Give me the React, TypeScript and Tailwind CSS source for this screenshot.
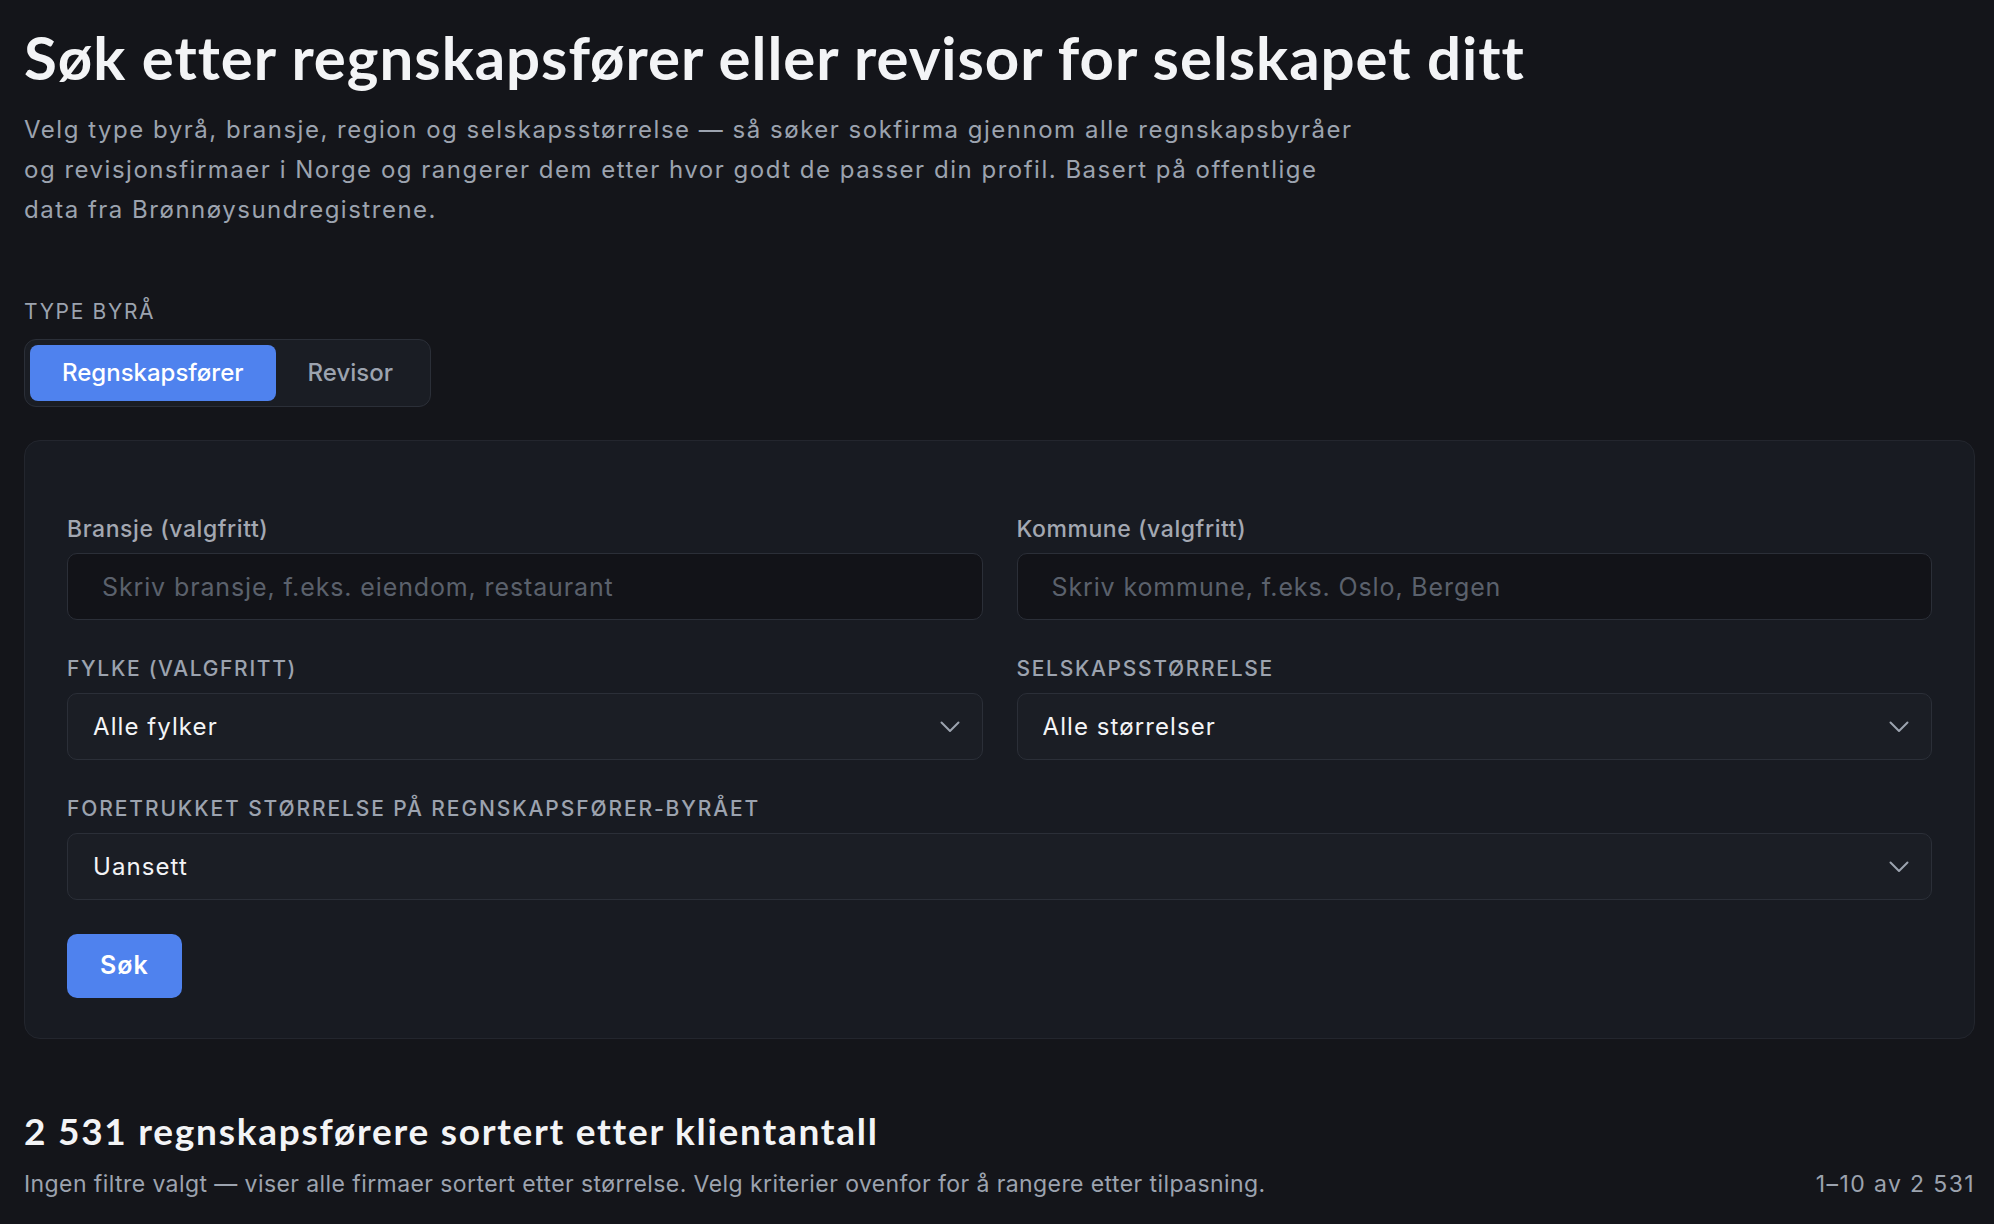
import React from 'react'

function Chevron() {
  return (
    <svg
      className="pointer-events-none absolute right-[23px] top-1/2 -translate-y-1/2"
      width="20"
      height="12"
      viewBox="0 0 20 12"
      fill="none"
    >
      <polyline points="1.5,1.5 10,10 18.5,1.5" stroke="#9ca3af" strokeWidth="2" strokeLinecap="round" strokeLinejoin="round" />
    </svg>
  )
}

function Select({ value, options }: { value: string; options: string[] }) {
  return (
    <div className="relative">
      <select
        defaultValue={value}
        className="h-[67px] w-full appearance-none rounded-[10px] border border-[#2b2f38] bg-[#1b1e25] pl-[25px] pr-12 text-[24px] tracking-[0.045em] text-[#f3f4f6] outline-none"
      >
        {options.map((o) => (
          <option key={o}>{o}</option>
        ))}
      </select>
      <Chevron />
    </div>
  )
}

function TextInput({ placeholder }: { placeholder: string }) {
  return (
    <input
      type="text"
      placeholder={placeholder}
      className="h-[67px] w-full rounded-[10px] border border-[#2b2f38] bg-[#121318] px-[34px] text-[25px] tracking-[0.035em] text-[#f3f4f6] outline-none placeholder:text-[#5b616c]"
    />
  )
}

export default function App() {
  return (
    <div className="min-h-screen bg-[#14151a] pl-6 pr-[19px] pt-6 pb-10 font-['Inter','Noto_Sans',sans-serif] text-[#f3f4f6]">
      {/* Header */}
      <h1 className="font-['Lato',sans-serif] text-[60px] font-bold leading-[66px] tracking-[0.016em] text-[#f3f4f6]">
        Søk etter regnskapsfører eller revisor for selskapet ditt
      </h1>
      <p className="mt-5 max-w-[1345px] text-[24px] leading-[40px] tracking-[0.063em] text-[#9ca3af]">
        Velg type byrå, bransje, region og selskapsstørrelse — så søker sokfirma gjennom alle regnskapsbyråer og
        revisjonsfirmaer i Norge og rangerer dem etter hvor godt de passer din profil. Basert på offentlige data fra
        Brønnøysundregistrene.
      </p>

      {/* Type byrå */}
      <div className="mt-[67px] text-[21px] leading-[30px] tracking-[0.08em] text-[#9ca3af]">TYPE BYRÅ</div>
      <div className="mt-[12px] inline-flex rounded-[12px] border border-[#2b2f38] bg-[#1a1d24] p-[5px]">
        <button className="h-[56px] rounded-[8px] bg-[#4f82ee] px-[32px] text-[24px] font-medium text-white">
          Regnskapsfører
        </button>
        <button className="h-[56px] rounded-[8px] px-[32px] text-[24px] font-medium text-[#9ca3af]">Revisor</button>
      </div>

      {/* Filter card */}
      <div className="mt-[33px] rounded-[16px] border border-[#23262e] bg-[#181b22] px-[42px] pb-[40px] pt-[73px]">
        <div className="grid grid-cols-2 gap-x-[34px] gap-y-[34px]">
          <div>
            <label className="mb-[9px] block text-[23px] font-medium leading-[30px] tracking-[0.025em] text-[#a3a8b2]">
              Bransje (valgfritt)
            </label>
            <TextInput placeholder="Skriv bransje, f.eks. eiendom, restaurant" />
          </div>
          <div>
            <label className="mb-[9px] block text-[23px] font-medium leading-[30px] tracking-[0.025em] text-[#a3a8b2]">
              Kommune (valgfritt)
            </label>
            <TextInput placeholder="Skriv kommune, f.eks. Oslo, Bergen" />
          </div>
          <div>
            <label className="mb-[9px] block text-[21px] font-medium leading-[30px] tracking-[0.08em] text-[#9ca3af]">
              FYLKE (VALGFRITT)
            </label>
            <Select value="Alle fylker" options={['Alle fylker', 'Oslo', 'Vestland', 'Rogaland', 'Trøndelag']} />
          </div>
          <div>
            <label className="mb-[9px] block text-[21px] font-medium leading-[30px] tracking-[0.08em] text-[#9ca3af]">
              SELSKAPSSTØRRELSE
            </label>
            <Select value="Alle størrelser" options={['Alle størrelser', 'Små', 'Mellomstore', 'Store']} />
          </div>
          <div className="col-span-2">
            <label className="mb-[9px] block text-[21px] font-medium leading-[30px] tracking-[0.09em] text-[#9ca3af]">
              FORETRUKKET STØRRELSE PÅ REGNSKAPSFØRER-BYRÅET
            </label>
            <Select value="Uansett" options={['Uansett', 'Små byråer', 'Mellomstore byråer', 'Store byråer']} />
          </div>
        </div>
        <button className="mt-[34px] h-[64px] rounded-[10px] bg-[#4f82ee] px-[33px] text-[25px] font-semibold tracking-[0.04em] text-white">
          Søk
        </button>
      </div>

      {/* Results header */}
      <h2 className="mt-[70px] font-['Lato',sans-serif] text-[37px] font-bold leading-[44px] tracking-[0.047em] text-[#f3f4f6]">
        2 531 regnskapsførere sortert etter klientantall
      </h2>
      <div className="mt-[15px] flex items-baseline justify-between text-[23px] leading-[32px] text-[#9ca3af]">
        <span className="tracking-[0.018em]">
          Ingen filtre valgt — viser alle firmaer sortert etter størrelse. Velg kriterier ovenfor for å rangere etter
          tilpasning.
        </span>
        <span className="tracking-[0.06em]">1–10 av 2 531</span>
      </div>
    </div>
  )
}
